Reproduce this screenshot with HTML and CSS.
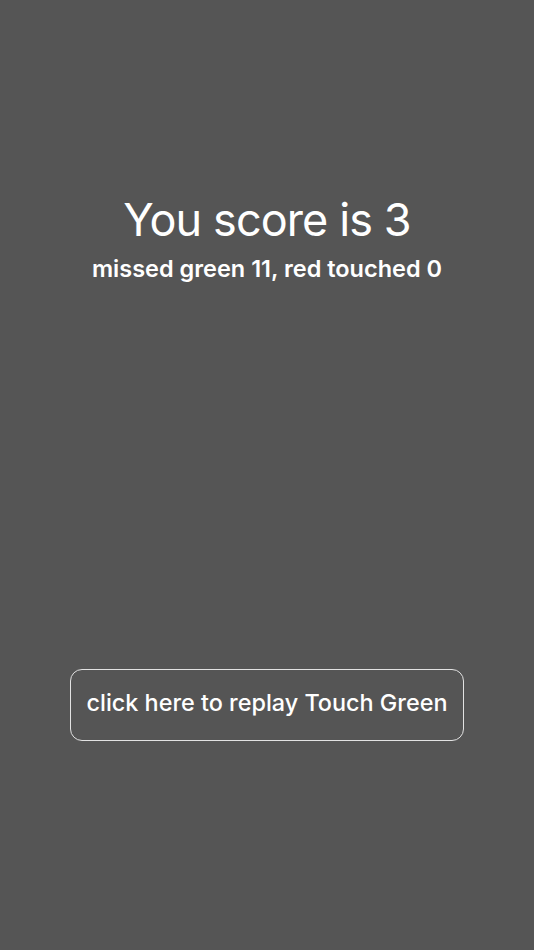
FILE: index.html
```html
<!DOCTYPE html>
<html>
<head>
<meta charset="utf-8">
<link rel="stylesheet" href="styles.css">
</head>
<body>
<main class="screen">
  <section class="result">
    <h1 class="score">You score is 3</h1>
    <p class="details">missed green 11, red touched 0</p>
  </section>
  <button class="replay">click here to replay Touch Green</button>
</main>
</body>
</html>
```
FILE: styles.css
```css
html, body {
  margin: 0;
  padding: 0;
  background: #555555;
}
.screen {
  width: 534px;
  height: 950px;
  display: flex;
  flex-direction: column;
  align-items: center;
  font-family: Inter, "Noto Sans", sans-serif;
  color: #ffffff;
}
.result {
  margin-top: 192px;
  display: flex;
  flex-direction: column;
  align-items: center;
}
.score {
  margin: 0;
  font-size: 45px;
  font-weight: 400;
  line-height: 56px;
  letter-spacing: -0.9px;
}
.details {
  margin: 0;
  margin-top: 6px;
  font-size: 23.5px;
  font-weight: 600;
  line-height: 30px;
  letter-spacing: 0;
}
.replay {
  margin-top: 385px;
  width: 394px;
  height: 72px;
  background: transparent;
  border: 1.5px solid #e2e2e2;
  border-radius: 12px;
  color: #ffffff;
  font-family: Inter, "Noto Sans", sans-serif;
  font-size: 23.4px;
  font-weight: 500;
  letter-spacing: 0;
  padding: 0 0 5px 0;
}
```
